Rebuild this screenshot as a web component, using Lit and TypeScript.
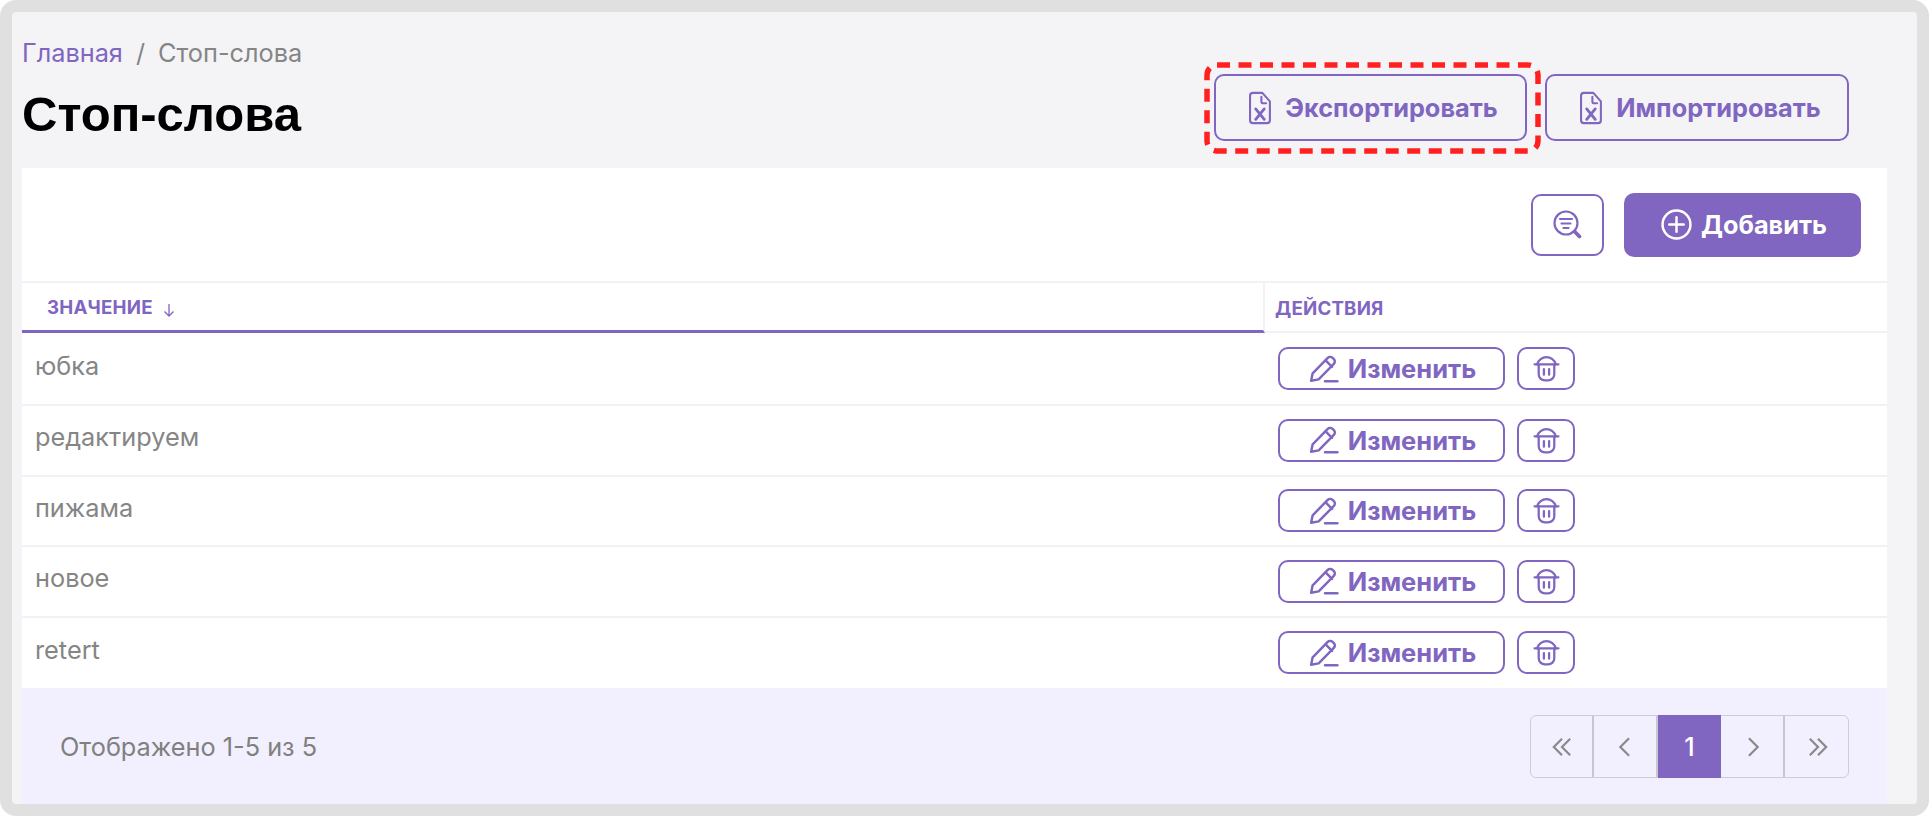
import { LitElement, html, css, svg } from "lit";
import { customElement } from "lit/decorators.js";

const P = css`#8066c0`;

const fileIcon = html`<svg class="ico-file" viewBox="0 0 24 36" fill="none" stroke="currentColor" stroke-width="2.200" stroke-linejoin="round" stroke-linecap="round">
  <path d="M5 2h10l8 9v20a3 3 0 0 1-3 3H5a3 3 0 0 1-3-3V5a3 3 0 0 1 3-3z"/>
  <path d="M14 6v5a2 2 0 0 0 2 2h3"/>
  <path d="M8 19l9 11M17 19L8 30" stroke-width="3"/>
</svg>`;

const pencil = html`<svg class="ico-pencil" viewBox="0 0 28 26" fill="none" stroke="currentColor" stroke-width="2.300" stroke-linejoin="round" stroke-linecap="round">
  <path d="M2 24l1.400-7L17.500 2.600a3.200 3.200 0 0 1 4.500 0l1.200 1.200a3.200 3.200 0 0 1 0 4.500L9 22.700z"/>
  <path d="M15.500 5l6 6"/>
  <path d="M15 24.500h11.500"/>
</svg>`;

const trash = html`<svg class="ico-trash" viewBox="0 0 26 26" fill="none" stroke="currentColor" stroke-width="2.200" stroke-linecap="round" stroke-linejoin="round">
  <path d="M1.500 9h23"/>
  <path d="M4 9C5 5 9 2 13 2s8 3 9 7"/>
  <path d="M5.500 9v9.500a6 6 0 0 0 6 6h3a6 6 0 0 0 6-6V9"/>
  <path d="M10.500 13.500v5.500M15.500 13.500v5.500"/>
</svg>`;

const searchIcon = html`<svg class="ico-search" viewBox="0 0 30 30" fill="none" stroke="currentColor" stroke-width="2.200" stroke-linecap="round">
  <circle cx="13" cy="13" r="11.500"/>
  <path d="M7 9h12M8.500 13.500h9M10.500 18h5"/>
  <path d="M21.500 21.500l5 5" stroke-width="3.800"/>
</svg>`;

const plusIcon = html`<svg class="ico-plus" viewBox="0 0 30 30" fill="none" stroke="currentColor" stroke-width="2.400" stroke-linecap="round">
  <circle cx="15" cy="15" r="13.500"/>
  <path d="M15 8v14M8 15h14"/>
</svg>`;

const chevron = (d: string) => html`<svg class="ico-chev" viewBox="0 0 24 24" fill="none" stroke="currentColor" stroke-width="1.900">${svg`<path d=${d}/>`}</svg>`;

const rows = ["юбка", "редактируем", "пижама", "новое", "retert"];

@customElement("app-root")
export class AppRoot extends LitElement {
  static styles = css`
    :host { display: block; width: 1929px; height: 816px; background: #fff; font-family: Inter, "Liberation Sans", sans-serif; }
    * { box-sizing: border-box; }
    .frame { width: 1929px; height: 816px; border: 12px solid #e0e0e0; border-radius: 16px; background: #f4f4f7; padding: 0 30px 0 10px; display: flex; flex-direction: column; overflow: hidden; }
    .top { height: 156px; display: flex; justify-content: space-between; padding-right: 38px; }
    .crumbs { font-size: 25.300px; line-height: 30px; color: #858585; display: flex; gap: 13px; padding-top: 26px; }
    .crumbs a { color: ${P}; }
    h1 { margin: 19px 0 0; font: 700 49px/54px "Liberation Sans", sans-serif; color: #000; }
    .actions { display: flex; gap: 18px; padding-top: 62px; align-items: flex-start; }
    .btn { display: inline-flex; align-items: center; justify-content: center; border: 2.500px solid ${P}; border-radius: 10px; color: ${P}; background: transparent; font-weight: 700; font-family: Inter, sans-serif; }
    .outline { height: 67px; font-size: 25.300px; gap: 14px; }
    .export { width: 313px; position: relative; padding-left: 5px; }
    .import { width: 304px; padding-left: 6px; }
    .mark { position: absolute; left: -12px; top: -14px; width: 337px; height: 92px; pointer-events: none; }
    .ico-file { width: 23px; height: 34px; }
    .card { background: #fff; flex: 1; display: flex; flex-direction: column; }
    .toolbar { height: 115px; display: flex; justify-content: flex-end; align-items: center; gap: 20px; padding-right: 26px; border-bottom: 2px solid #f2f1f7; }
    .search { width: 73px; height: 62px; }
    .ico-search { width: 30px; height: 30px; }
    .add { width: 237px; height: 64px; background: ${P}; color: #fff; border: none; font-size: 25.300px; gap: 9px; padding-left: 3px; }
    .ico-plus { width: 31px; height: 31px; }
    .grid { display: grid; grid-template-columns: 1243px 1fr; grid-template-rows: 50px 73px repeat(4, 70.500px); }
    .th { display: flex; align-items: center; font-size: 18.700px; font-weight: 700; color: ${P}; letter-spacing: 0.200px; padding-top: 2px; }
    .th.a { border-bottom: 3px solid ${P}; border-right: 2px solid #f2f1f7; padding-left: 25px; gap: 9px; }
    .th.b { border-bottom: 2px solid #f2f1f7; padding-left: 10px; }
    .arrow { width: 14px; height: 16px; margin-top: 4px; }
    .td { border-bottom: 2px solid #f2f1f7; display: flex; align-items: center; }
    .td.last { border-bottom: none; }
    .td.v { font-size: 25.300px; color: #858585; padding: 0 0 7px 13px; }
    .td.c { padding-left: 13px; gap: 12px; }
    .edit { width: 227px; height: 43px; font-size: 25.500px; gap: 9px; padding-left: 2px; }
    .del { width: 58px; height: 43px; }
    .ico-pencil { width: 30px; height: 28px; }
    .ico-trash { width: 27px; height: 27px; }
    .footer { height: 116px; background: #f2f0fe; display: flex; justify-content: space-between; align-items: flex-start; padding: 27px 38px 0; }
    .count { font-size: 25.300px; color: #808080; line-height: 63px; }
    .pager { display: flex; height: 63px; border: 1px solid #cfccd6; border-radius: 6px; }
    .pg { width: 63.400px; display: flex; align-items: center; justify-content: center; color: #8a8a8a; border-right: 2px solid #c9c6cf; }
    .pg:last-child { border-right: none; }
    .pg.on { background: ${P}; color: #fff; font-size: 25px; font-weight: 500; border-right: none; margin: -1px 0; }
    .pg.shift { padding-left: 3px; }
    .ico-chev { width: 28px; height: 28px; }
  `;

  render() {
    return html`<div class="frame">
      <div class="top">
        <div>
          <div class="crumbs"><a>Главная</a><span>/</span><span>Стоп-слова</span></div>
          <h1>Стоп-слова</h1>
        </div>
        <div class="actions">
          <div class="btn outline export">${fileIcon}<span>Экспортировать</span>
            <svg class="mark" viewBox="0 0 337 92" fill="none"><rect x="3" y="3" width="331" height="86" rx="10" stroke="#ff2020" stroke-width="5.500" stroke-dasharray="13 8.500"/></svg>
          </div>
          <div class="btn outline import">${fileIcon}<span>Импортировать</span></div>
        </div>
      </div>
      <div class="card">
        <div class="toolbar">
          <div class="btn search">${searchIcon}</div>
          <div class="btn add">${plusIcon}<span>Добавить</span></div>
        </div>
        <div class="grid">
          <div class="th a"><span>ЗНАЧЕНИЕ</span>
            <svg class="arrow" viewBox="0 0 14 16" fill="none" stroke="currentColor" stroke-width="1.300"><path d="M7 2v12M2.500 9.500L7 14l4.500-4.500"/></svg>
          </div>
          <div class="th b">ДЕЙСТВИЯ</div>
          ${rows.map((r, i) => {
            const last = i === rows.length - 1 ? "last" : "";
            return html`
            <div class="td v ${last}">${r}</div>
            <div class="td c ${last}">
              <div class="btn edit">${pencil}<span>Изменить</span></div>
              <div class="btn del">${trash}</div>
            </div>`;
          })}
        </div>
        <div class="footer">
          <div class="count">Отображено 1-5 из 5</div>
          <div class="pager">
            <div class="pg">${chevron("M12 5l-7 7 7 7M19 5l-7 7 7 7")}</div>
            <div class="pg">${chevron("M15.500 4.500L8 12l7.500 7.500")}</div>
            <div class="pg on">1</div>
            <div class="pg shift">${chevron("M8.500 4.500L16 12l-7.500 7.500")}</div>
            <div class="pg shift">${chevron("M5 5l7 7-7 7M12 5l7 7-7 7")}</div>
          </div>
        </div>
      </div>
    </div>`;
  }
}
